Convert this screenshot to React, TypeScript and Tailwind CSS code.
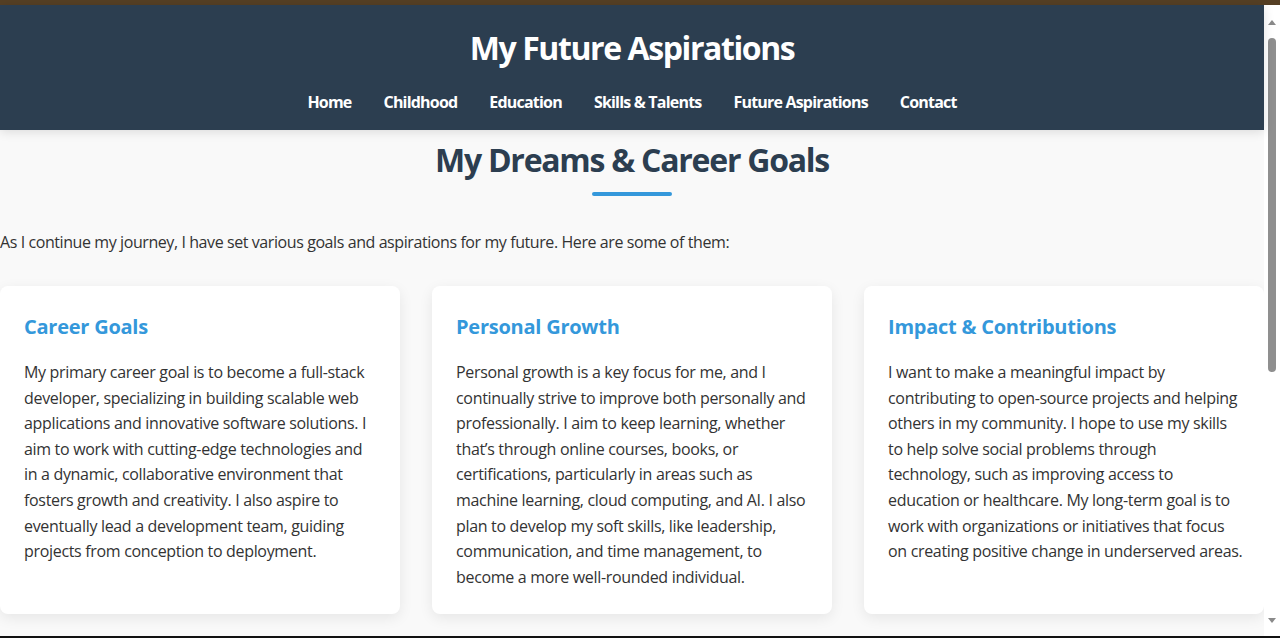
import React from 'react';

const navItems = ['Home', 'Childhood', 'Education', 'Skills & Talents', 'Future Aspirations', 'Contact'];

// lines kept as they wrap in the design
const goals = [
  {
    title: 'Career Goals',
    lines: [
      'My primary career goal is to become a full-stack',
      'developer, specializing in building scalable web',
      'applications and innovative software solutions. I',
      'aim to work with cutting-edge technologies and',
      'in a dynamic, collaborative environment that',
      'fosters growth and creativity. I also aspire to',
      'eventually lead a development team, guiding',
      'projects from conception to deployment.',
    ],
  },
  {
    title: 'Personal Growth',
    lines: [
      'Personal growth is a key focus for me, and I',
      'continually strive to improve both personally and',
      'professionally. I aim to keep learning, whether',
      'that\u2019s through online courses, books, or',
      'certifications, particularly in areas such as',
      'machine learning, cloud computing, and AI. I also',
      'plan to develop my soft skills, like leadership,',
      'communication, and time management, to',
      'become a more well-rounded individual.',
    ],
  },
  {
    title: 'Impact & Contributions',
    lines: [
      'I want to make a meaningful impact by',
      'contributing to open-source projects and helping',
      'others in my community. I hope to use my skills',
      'to help solve social problems through',
      'technology, such as improving access to',
      'education or healthcare. My long-term goal is to',
      'work with organizations or initiatives that focus',
      'on creating positive change in underserved areas.',
    ],
  },
];

const Scrollbar = () => (
  <div className="w-4 shrink-0 bg-white flex flex-col items-center">
    <div className="h-[26px] flex items-end justify-center pb-[6px]">
      <div className="w-0 h-0 border-l-[4px] border-r-[4px] border-b-[5px] border-l-transparent border-r-transparent border-b-[#8a8a8a]" />
    </div>
    <div className="w-[8px] h-[334px] mt-[7px] rounded-full bg-[#8f8f8f]" />
    <div className="flex-1" />
    <div className="h-[18px] flex items-start justify-center">
      <div className="w-0 h-0 border-l-[4px] border-r-[4px] border-t-[5px] border-l-transparent border-r-transparent border-t-[#8a8a8a]" />
    </div>
  </div>
);

export default function App() {
  return (
    <div
      className="h-[638px] overflow-hidden flex flex-col bg-[#f9f9f9] text-[#333]"
      style={{ fontFamily: '"Open Sans", "Noto Sans", sans-serif' }}
    >
      <div className="h-[5px] shrink-0 bg-[#553f24]" />
      <div className="flex flex-1 min-h-0">
        <div className="flex-1 min-w-0 flex flex-col">
          {/* Header */}
          <header className="h-[125px] shrink-0 bg-[#2c3e50] text-white shadow-[0_2px_10px_rgba(0,0,0,0.12)] relative z-10 flex flex-col items-center">
            <h1 className="mt-[24px] text-[32px] leading-[38px] font-bold tracking-[-0.044em]">My Future Aspirations</h1>
            <nav className="mt-[24px] flex items-center gap-8 text-[16px] font-bold tracking-[-0.05em]">
              {navItems.map((item) => (
                <a key={item} href="#" className="leading-[22px]">
                  {item}
                </a>
              ))}
            </nav>
          </header>

          {/* Main */}
          <main className="flex-1 min-h-0">
            <div className="flex flex-col items-center pt-[10px]">
              <h2 className="text-[32px] leading-[40px] font-bold text-[#2c3e50] tracking-[-0.039em]">
                My Dreams &amp; Career Goals
              </h2>
              <div className="mt-[12px] w-20 h-1 rounded-full bg-[#3498db]" />
            </div>
            <p className="mt-[33px] text-[16px] leading-[26px] tracking-[-0.026em]">
              As I continue my journey, I have set various goals and aspirations for my future. Here are some of them:
            </p>
            <div className="mt-[31px] grid grid-cols-3 gap-8">
              {goals.map((g) => (
                <div key={g.title} className="bg-white rounded-lg p-6 shadow-[0_4px_14px_rgba(0,0,0,0.08)]">
                  <h3 className="mt-[1px] text-[20px] leading-[32px] font-bold text-[#3498db] tracking-[-0.012em]">
                    {g.title}
                  </h3>
                  <p className="mt-[17px] text-[16px] leading-[25.6px] text-[#333] tracking-[-0.02em]">
                    {g.lines.map((line) => (
                      <span key={line} className="block whitespace-nowrap">
                        {line}
                      </span>
                    ))}
                  </p>
                </div>
              ))}
            </div>
          </main>
        </div>
        <Scrollbar />
      </div>
      <div className="h-[2px] shrink-0 bg-[#111]" />
    </div>
  );
}
